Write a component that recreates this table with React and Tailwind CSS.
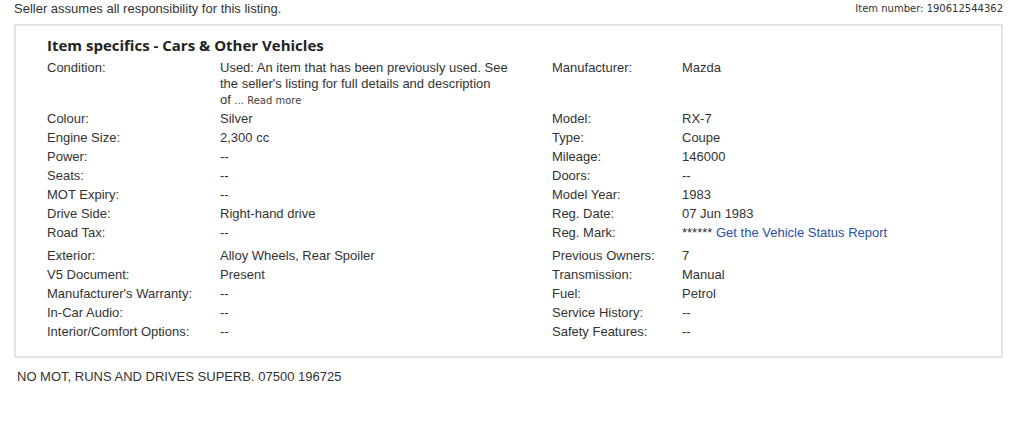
import React from 'react';

const left = [
  ['Colour:', 'Silver'],
  ['Engine Size:', '2,300 cc'],
  ['Power:', '--'],
  ['Seats:', '--'],
  ['MOT Expiry:', '--'],
  ['Drive Side:', 'Right-hand drive'],
  ['Road Tax:', '--'],
  ['Exterior:', 'Alloy Wheels, Rear Spoiler'],
  ['V5 Document:', 'Present'],
  ["Manufacturer's Warranty:", '--'],
  ['In-Car Audio:', '--'],
  ['Interior/Comfort Options:', '--'],
];

const right = [
  ['Model:', 'RX-7'],
  ['Type:', 'Coupe'],
  ['Mileage:', '146000'],
  ['Doors:', '--'],
  ['Model Year:', '1983'],
  ['Reg. Date:', '07 Jun 1983'],
  ['Reg. Mark:', null],
  ['Previous Owners:', '7'],
  ['Transmission:', 'Manual'],
  ['Fuel:', 'Petrol'],
  ['Service History:', '--'],
  ['Safety Features:', '--'],
];

const RegMark = () => (
  <>
    ****** <a href="#" className="text-[#2a52a0]">Get the Vehicle Status Report</a>
  </>
);

const App = () => {
  return (
    <div className="w-[1023px] h-[429px] bg-white text-[#333] font-['Liberation_Sans',Arial,sans-serif] text-[13px] leading-4 pl-[14px] pr-[20px]">
      {/* top line */}
      <div className="flex justify-between items-start pt-[1px] h-[24px]">
        <span>Seller assumes all responsibility for this listing.</span>
        <span className="font-['DejaVu_Sans',Verdana,sans-serif] text-[10px] leading-[14px] pt-[1px]">
          Item number: 190612544362
        </span>
      </div>

      {/* item specifics box */}
      <div className="border-2 border-[#e3e3e3] pl-[31px] pr-4 pt-[8px] pb-[15px]">
        <h2 className="font-['Open_Sans',sans-serif] font-bold text-[15px] leading-[22px] text-[#222] mb-[2px]">
          Item specifics - Cars &amp; Other Vehicles
        </h2>
        <div className="grid grid-cols-[173px_332px_130px_1fr]">
          <div className="pt-[1.5px] pb-[0.5px]">Condition:</div>
          <div className="pt-[1.5px] pb-[0.5px]">
            Used: An item that has been previously used. See<br />
            the seller's listing for full details and description<br />
            of <span className="font-['DejaVu_Sans',Verdana,sans-serif] text-[10px] text-[#444]">... Read more</span>
          </div>
          <div className="pt-[1.5px] pb-[0.5px]">Manufacturer:</div>
          <div className="pt-[1.5px] pb-[0.5px]">Mazda</div>
          {left.map(([l, v], i) => {
            const pad = i === 6 ? 'pt-[1.5px] pb-[5.5px]' : 'py-[1.5px]';
            const [rl, rv] = right[i];
            return (
              <React.Fragment key={l}>
                <div className={pad}>{l}</div>
                <div className={pad}>{v}</div>
                <div className={pad}>{rl}</div>
                <div className={pad}>{rv === null ? <RegMark /> : rv}</div>
              </React.Fragment>
            );
          })}
        </div>
      </div>

      <p className="pl-[3px] pt-[11px]">NO MOT, RUNS AND DRIVES SUPERB. 07500 196725</p>
    </div>
  );
};

export default App;
